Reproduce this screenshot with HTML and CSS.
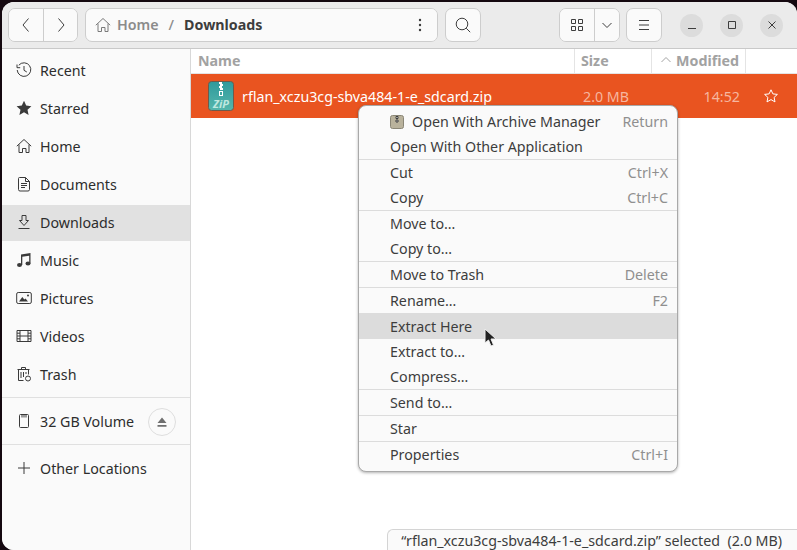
FILE: index.html
```html
<!DOCTYPE html>
<html>
<head>
  <meta charset="utf-8">
  <title>Downloads</title>
  <link rel="stylesheet" href="styles.css">
</head>
<body>
  <div class="window">
    <header class="toolbar">
      <div class="btn-group nav">
        <button class="btn"><svg width="16" height="16" viewBox="0 0 16 16"><path d="M10.5 1.5 5 8l5.5 6.500"/></svg></button>
        <button class="btn"><svg width="16" height="16" viewBox="0 0 16 16"><path d="M5.500 1.500 11 8l-5.500 6.500"/></svg></button>
      </div>
      <div class="btn-group path">
        <div class="crumbs">
          <svg width="16" height="16" viewBox="0 0 16 16"><path d="M.8 8.200 8 1.500l7.200 6.700M3 6.500v8h3.500v-4H10v4h3v-8"/></svg>
          <span class="crumb-home">Home</span>
          <span class="crumb-sep">/</span>
          <span class="crumb-here">Downloads</span>
        </div>
        <button class="btn kebab"><svg width="16" height="16" viewBox="0 0 16 16"><circle cx="8" cy="3" r="1.200"/><circle cx="8" cy="8" r="1.200"/><circle cx="8" cy="13" r="1.200"/></svg></button>
      </div>
      <button class="btn single"><svg width="18" height="18" viewBox="0 0 18 18"><circle cx="8" cy="8" r="5.800"/><path d="m12.200 12.200 4 4"/></svg></button>
      <div class="spacer"></div>
      <div class="btn-group view">
        <button class="btn grid-btn"><svg width="14" height="14" viewBox="0 0 14 14"><path d="M1.500 1.500h4v4h-4zM8.500 1.500h4v4h-4zM1.500 8.500h4v4h-4zM8.500 8.500h4v4h-4z"/></svg></button>
        <button class="btn drop-btn"><svg width="12" height="12" viewBox="0 0 12 12"><path d="M1.500 4 6 8.500 10.500 4"/></svg></button>
      </div>
      <button class="btn single menu-btn"><svg width="14" height="14" viewBox="0 0 14 14"><path d="M2 2.500h10M2 7h10M2 11.500h10"/></svg></button>
      <div class="win-controls">
        <span class="win-btn"><svg width="12" height="12" viewBox="0 0 12 12"><path d="M2 9.500h8"/></svg></span>
        <span class="win-btn"><svg width="12" height="12" viewBox="0 0 12 12"><path d="M2.500 2.500h7v7h-7z"/></svg></span>
        <span class="win-btn"><svg width="12" height="12" viewBox="0 0 12 12"><path d="m2.500 2.500 7 7M9.500 2.500l-7 7"/></svg></span>
      </div>
    </header>

    <div class="content">
      <nav class="sidebar">
        <div class="places">
          <div class="place"><svg width="16" height="16" viewBox="0 0 16 16"><path d="M2.800 3.200A6.800 6.800 0 1 1 1.200 8M1 2.500v3.200h3.200M8 4v4.300l2.800 1.700"/></svg>Recent</div>
          <div class="place"><svg class="solid" width="16" height="16" viewBox="0 0 16 16"><path d="m8 .8 2.200 4.800 5.200.6-3.900 3.500 1.100 5.200L8 12.300l-4.600 2.600 1.100-5.200L.6 6.200l5.200-.6z"/></svg>Starred</div>
          <div class="place"><svg width="16" height="16" viewBox="0 0 16 16"><path d="M.8 8.200 8 1.500l7.200 6.700M3 6.500v8h3.500v-4H10v4h3v-8"/></svg>Home</div>
          <div class="place"><svg width="16" height="16" viewBox="0 0 16 16"><path d="M2.500 2.500a1 1 0 0 1 1-1h6l4 4v8a1.500 1.500 0 0 1-1.500 1.500H4a1.500 1.500 0 0 1-1.500-1.500zM9.500 1.500v4h4M5 7.500h6M5 9.500h6M5 11.500h4"/></svg>Documents</div>
          <div class="place current"><svg width="16" height="16" viewBox="0 0 16 16"><path d="M6 1.500h4v5h2.500L8 11.500 3.500 6.500H6zM2.500 14.500h11"/></svg>Downloads</div>
          <div class="place"><svg class="solid" width="16" height="16" viewBox="0 0 16 16"><path d="M5 2.500 14.500 1v10.500h-1.300V3.700L6.300 4.800v8.200H5z"/><ellipse cx="3.500" cy="13" rx="2.500" ry="2"/><ellipse cx="12" cy="11.500" rx="2.500" ry="2"/></svg>Music</div>
          <div class="place"><svg width="16" height="16" viewBox="0 0 16 16"><rect x=".7" y="2.500" width="14.600" height="11" rx="1.500"/><path class="fill" d="m3 11.500 3.300-4.500 2 2.500 1.200-1 2.500 3z"/><circle class="fill" cx="12" cy="5.500" r="1"/></svg>Pictures</div>
          <div class="place"><svg width="16" height="16" viewBox="0 0 16 16"><path d="M1 2.500h14v11H1zM4 2.500v11M12 2.500v11M4 8h8M1 5.200h3M1 8h3M1 10.800h3M12 5.200h3M12 8h3M12 10.800h3"/></svg>Videos</div>
          <div class="place"><svg width="16" height="16" viewBox="0 0 16 16"><path d="M1.500 3.500h12M5.500 3.500v-2h4v2M2.500 3.500v11h5M12.500 3.500v5M5 6v6M7.500 6v5M10 6v2"/><circle cx="12" cy="12.500" r="2.500"/></svg>Trash</div>
        </div>
        <div class="places volume">
          <div class="place"><svg width="16" height="16" viewBox="0 0 16 16"><path d="M3.500 2.500a1 1 0 0 1 1-1h7a1 1 0 0 1 1 1v11a1 1 0 0 1-1 1h-7a1 1 0 0 1-1-1zM6 1.500v3M8 1.500v3M10 1.500v3"/></svg>32 GB Volume<span class="eject"><svg width="14" height="14" viewBox="0 0 14 14"><path d="M7 2.500 11.500 8h-9zM2.500 10h9v1.700h-9z"/></svg></span></div>
        </div>
        <div class="places other">
          <div class="place"><svg width="16" height="16" viewBox="0 0 16 16"><path d="M8 2v12M2 8h12"/></svg>Other Locations</div>
        </div>
      </nav>

      <main class="files">
        <div class="columns">
          <div class="col col-name">Name</div>
          <div class="col col-size">Size</div>
          <div class="col col-date"><svg width="10" height="10" viewBox="0 0 10 10"><path d="M.5 7 5 2.500 9.500 7"/></svg>Modified</div>
          <div class="col col-star"></div>
        </div>
        <div class="file-row">
          <div class="cell-name">
            <svg class="zip" width="26" height="30" viewBox="0 0 26 30">
              <defs>
                <linearGradient id="zip-body" x1="0" y1="0" x2="0" y2="1">
                  <stop offset="0" stop-color="#2f9a9c"/>
                  <stop offset="1" stop-color="#56b6ac"/>
                </linearGradient>
              </defs>
              <rect x=".5" y=".5" width="25" height="29" rx="3" fill="url(#zip-body)" stroke="#6e5a4a"/>
              <path d="M11 1h3v2h-3zM12 3h3v2h-3zM11 5h3v2h-3zM12 7h3v2h-3z" fill="#fff"/>
              <rect x="11.500" y="10.500" width="3" height="4" fill="none" stroke="#fff"/>
              <text x="13" y="26.500" text-anchor="middle" class="zip-text">ZiP</text>
            </svg>
            <span>rflan_xczu3cg-sbva484-1-e_sdcard.zip</span>
          </div>
          <div class="cell-size">2.0 MB</div>
          <div class="cell-date">14:52</div>
          <div class="cell-star"><svg width="16" height="16" viewBox="0 0 16 16"><path d="m8 1.800 1.900 4.100 4.500.5-3.300 3 .9 4.500L8 11.600l-4 2.300.9-4.500-3.300-3 4.500-.5z"/></svg></div>
        </div>
      </main>
    </div>

    <div class="menu">
      <div class="menu-item with-icon">
        <svg width="14" height="14" viewBox="0 0 14 14"><rect x=".5" y=".5" width="13" height="13" rx="2" fill="#b9b29c" stroke="#8a8676"/><path d="M6 1.500h2v2H6zM6 5h2v2H6z" fill="#eee"/></svg>
        <span>Open With Archive Manager</span><kbd>Return</kbd>
      </div>
      <div class="menu-item"><span>Open With Other Application</span></div>
      <hr>
      <div class="menu-item"><span>Cut</span><kbd>Ctrl+X</kbd></div>
      <div class="menu-item"><span>Copy</span><kbd>Ctrl+C</kbd></div>
      <hr>
      <div class="menu-item"><span>Move to…</span></div>
      <div class="menu-item"><span>Copy to…</span></div>
      <hr>
      <div class="menu-item"><span>Move to Trash</span><kbd>Delete</kbd></div>
      <hr>
      <div class="menu-item"><span>Rename…</span><kbd>F2</kbd></div>
      <div class="menu-item hover"><span>Extract Here</span></div>
      <div class="menu-item"><span>Extract to…</span></div>
      <div class="menu-item"><span>Compress…</span></div>
      <hr>
      <div class="menu-item"><span>Send to…</span></div>
      <hr>
      <div class="menu-item"><span>Star</span></div>
      <hr>
      <div class="menu-item"><span>Properties</span><kbd>Ctrl+I</kbd></div>
    </div>

    <svg class="pointer" width="14" height="20" viewBox="0 0 14 20"><path d="M1 1v14l3.500-3 2.500 6 2.500-1-2.500-6H12z" fill="#222" stroke="#eee" stroke-width="1"/></svg>

    <div class="status">“rflan_xczu3cg-sbva484-1-e_sdcard.zip” selected&nbsp; (2.0 MB)</div>
  </div>
</body>
</html>
```

FILE: styles.css
```css
* {
  box-sizing: border-box;
}
html, body {
  margin: 0;
  height: 100%;
  overflow: hidden;
}
body {
  background: #14080f;
  padding: 2px 0 0 2px;
  font-family: "Noto Sans", sans-serif;
  font-size: 14.25px;
  color: #2d2d2d;
}
svg {
  flex: none;
  fill: none;
  stroke: currentColor;
  stroke-width: 1;
}

.window {
  position: relative;
  height: 548px;
  display: flex;
  flex-direction: column;
  background: #fff;
  border-radius: 12px 12px 0 12px;
  overflow: hidden;
}

/* toolbar */
.toolbar {
  height: 47px;
  flex: none;
  display: flex;
  align-items: center;
  gap: 7px;
  padding: 0 6px;
  background: #ebebeb;
  border-bottom: 1px solid #c9c9c9;
}
.spacer {
  flex: 1;
}
.btn {
  height: 34px;
  padding: 0;
  display: flex;
  align-items: center;
  justify-content: center;
  background: #fafafa;
  border: 0;
  color: #3d3d3d;
}
.btn.single {
  width: 36px;
  border: 1px solid #cdcdcd;
  border-radius: 7px;
}
.btn-group {
  height: 34px;
  display: flex;
  background: #fafafa;
  border: 1px solid #cdcdcd;
  border-radius: 7px;
  overflow: hidden;
}
.btn-group .btn {
  height: 32px;
}
.btn-group .btn + .btn {
  border-left: 1px solid #cdcdcd;
}
.nav .btn {
  width: 34px;
}
.path {
  width: 353px;
}
.crumbs {
  flex: 1;
  display: flex;
  align-items: center;
  padding: 0 0 2px 9px;
  font-weight: 500;
}
.crumbs svg {
  color: #7a7a7a;
  margin: 2px 6px 0 0;
}
.crumb-home {
  color: #8b8b8b;
  font-weight: 600;
}
.crumb-sep {
  color: #8b8b8b;
  margin: 0 10px;
}
.crumb-here {
  color: #3d3d3d;
  font-weight: 700;
}
.kebab {
  width: 34px;
}
.kebab svg {
  fill: #3d3d3d;
  stroke: none;
}
.view .grid-btn {
  width: 34px;
}
.view .drop-btn {
  width: 25px;
}
.menu-btn {
  margin: 0 11px 0 -1px;
}
.win-controls {
  display: flex;
  gap: 17px;
  margin-right: 8px;
}
.win-btn {
  width: 23px;
  height: 23px;
  display: flex;
  align-items: center;
  justify-content: center;
  border-radius: 50%;
  background: #dcdcdc;
  color: #3d3d3d;
}

/* sidebar */
.content {
  flex: 1;
  display: flex;
  min-height: 0;
}
.sidebar {
  width: 189px;
  flex: none;
  background: #fafafa;
  border-right: 1px solid #d8d8d8;
  padding-top: 3px;
}
.places {
  display: flex;
  flex-direction: column;
}
.volume, .other {
  border-top: 1px solid #e0e0e0;
}
.volume {
  margin-top: 3px;
  padding: 5px 0 3px;
}
.other {
  padding-top: 5px;
}
.place {
  height: 36px;
  margin: 1px 0;
  display: flex;
  align-items: center;
  gap: 8px;
  padding: 0 0 2px 14px;
}
.place svg.solid, .place svg .fill {
  fill: currentColor;
  stroke: none;
}
.place > svg {
  color: #3a3a3a;
}
.place.current {
  background: #e1e1e1;
}
.eject {
  width: 28px;
  height: 28px;
  margin: 2px 14px 0 auto;
  display: flex;
  align-items: center;
  justify-content: center;
  border: 1px solid #dedede;
  border-radius: 50%;
  color: #6f6f6f;
}
.eject svg {
  fill: currentColor;
  stroke: none;
}

/* file list */
.files {
  flex: 1;
  min-width: 0;
  background: #fff;
}
.columns {
  height: 25px;
  display: flex;
  border-bottom: 1px solid #e4e4e4;
  color: #a2a2a2;
  font-weight: 700;
}
.col {
  display: flex;
  align-items: center;
  padding: 0 6px 2px;
  border-right: 1px solid #e4e4e4;
}
.col-name {
  width: 384px;
  padding-left: 7px;
}
.col-size {
  width: 77px;
}
.col-date {
  width: 94px;
  justify-content: flex-end;
  gap: 5px;
}
.col-star {
  flex: 1;
  border-right: 0;
}
.file-row {
  height: 44px;
  display: flex;
  align-items: center;
  background: #e95420;
  color: #fff;
}
.cell-name {
  width: 384px;
  display: flex;
  align-items: center;
  gap: 8px;
  padding-left: 17px;
}
.zip {
  stroke: none;
}
.zip-text {
  font: italic 700 11px "Noto Sans", sans-serif;
  fill: #bfe8e0;
}
.cell-size {
  width: 77px;
  padding-left: 8px;
  color: #f6b69f;
}
.cell-date {
  width: 94px;
  padding-right: 6px;
  text-align: right;
  color: #f6b69f;
}
.cell-star {
  flex: 1;
  display: flex;
  justify-content: center;
  padding-right: 2px;
}

/* context menu */
.menu {
  position: absolute;
  left: 356px;
  top: 103px;
  width: 320px;
  padding: 3px 0 4px;
  background: #fafafa;
  border: 1px solid #a9a9a9;
  border-radius: 8px;
  box-shadow: 0 1px 3px rgba(0, 0, 0, .3);
  color: #3d3d3d;
}
.menu hr {
  height: 1px;
  margin: 0;
  border: 0;
  background: #dcdcdc;
}
.menu-item {
  height: 25px;
  display: flex;
  align-items: center;
  justify-content: space-between;
  padding: 0 9px 0 31px;
}
.menu-item.with-icon {
  justify-content: flex-start;
  gap: 7px;
}
.menu-item.with-icon svg {
  margin-right: 1px;
}
.menu-item.with-icon kbd {
  margin-left: auto;
}
.menu-item.hover {
  height: 26px;
  background: #dcdcdc;
}
kbd {
  font: inherit;
  color: #8f8f8f;
}
.pointer {
  position: absolute;
  left: 482px;
  top: 326px;
  stroke: none;
}

/* floating status */
.status {
  position: absolute;
  right: 0;
  bottom: 0;
  width: 410px;
  height: 21px;
  display: flex;
  align-items: center;
  justify-content: flex-end;
  padding-right: 15px;
  background: #fafafa;
  border: 1px solid #d4d4d4;
  border-width: 1px 0 0 1px;
  border-radius: 6px 0 0 0;
  color: #3d3d3d;
}
```
